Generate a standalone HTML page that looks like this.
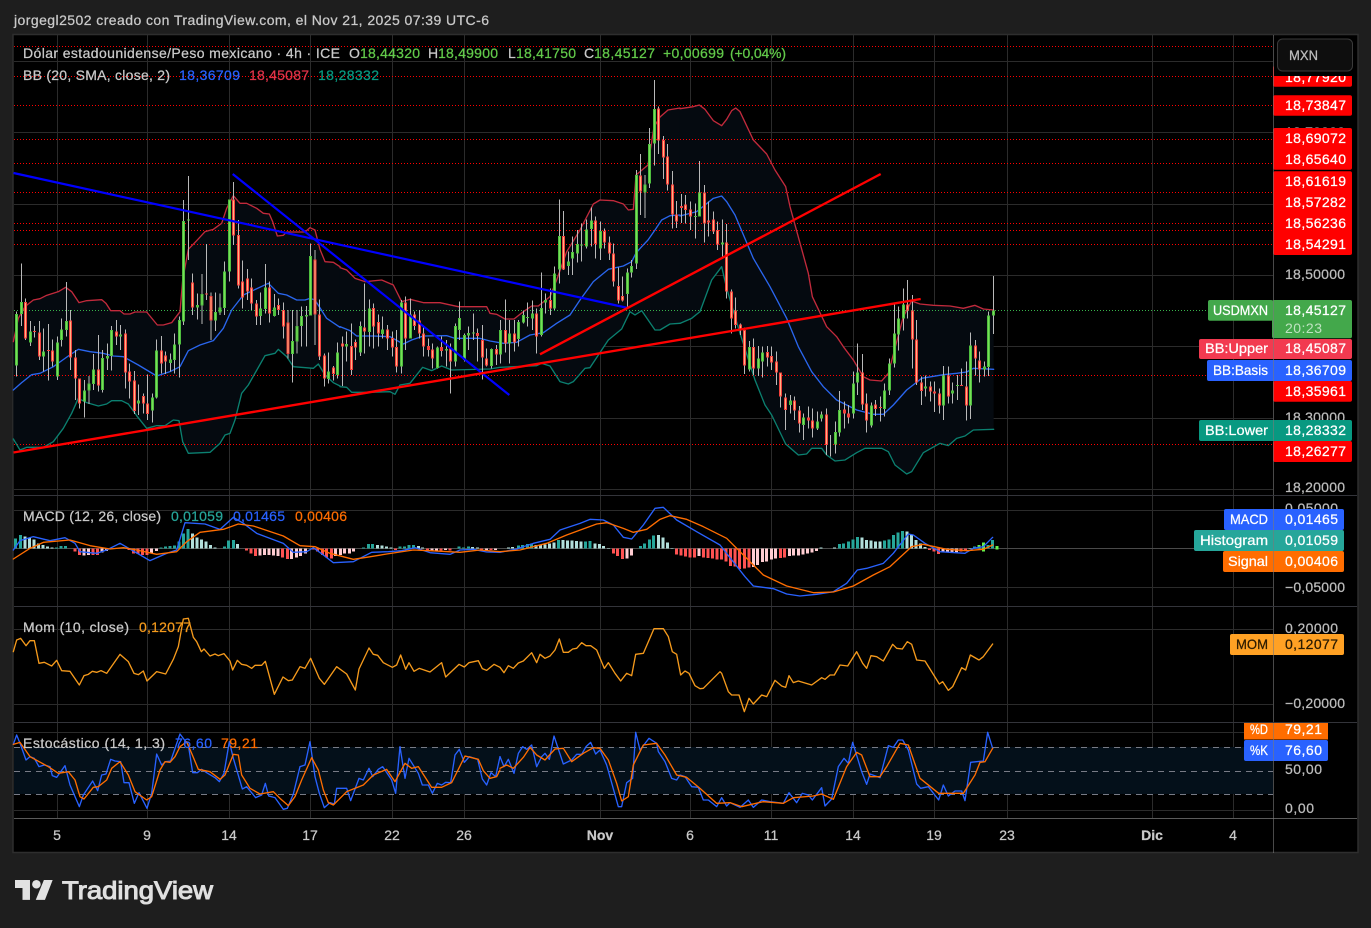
<!DOCTYPE html>
<html lang="es">
<head>
<meta charset="utf-8">
<title>USDMXN</title>
<style>
html,body{margin:0;padding:0;background:#1e1e1e;width:1371px;height:928px;overflow:hidden}
svg{display:block;font-family:"Liberation Sans",sans-serif;font-size:14px}
text{stroke-width:.25}
.w{fill:none;stroke:#b9b9b9;shape-rendering:crispEdges}
.up{fill:none;stroke:#4fbf3f;shape-rendering:crispEdges}
.upi{fill:none;stroke:#78df58;shape-rendering:crispEdges}
.dn{fill:none;stroke:#f2403c;shape-rendering:crispEdges}
.dni{fill:none;stroke:#ffb384;shape-rendering:crispEdges}
.h{shape-rendering:crispEdges}
.l{fill:none;stroke-linejoin:round;stroke-linecap:round}
.t{fill:#bdbdbd;stroke:#bdbdbd}
.g{fill:#c9c9c9;stroke:#c9c9c9}
.v{fill:#62c94a;stroke:#62c94a}
.lb{fill:#fff;stroke:#fff}
.cb{fill:#2962ff;stroke:#2962ff}
.cr{fill:#e0344a;stroke:#e0344a}
.cg{fill:#089981;stroke:#089981}
.ct{fill:#26a69a;stroke:#26a69a}
.co{fill:#ff6d00;stroke:#ff6d00}
.cy{fill:#f59a1c;stroke:#f59a1c}
.cd{fill:#2a1a00;stroke:#2a1a00}
</style>
</head>
<body>
<svg width="1371" height="928" viewBox="0 0 1371 928" xmlns="http://www.w3.org/2000/svg">
<rect width="1371" height="928" fill="#1e1e1e"/>
<text x="14" y="25" class="g" textLength="475">jorgegl2502 creado con TradingView.com, el Nov 21, 2025 07:39 UTC-6</text>
<rect x="13" y="34.5" width="1345" height="818" fill="#000" stroke="#2e2e2e" stroke-width="1.5"/>

<!-- grid -->
<path fill="none" stroke="#2b2b2b" d="M14 61.5H1273M14 132.5H1273M14 204.5H1273M14 275.5H1273M14 346.5H1273M14 418.5H1273M14 489.5H1273M14 510.5H1273M14 587.5H1273M14 629.5H1273M14 704.5H1273M14 732.5H1273M14 810.5H1273"/>
<path fill="none" stroke="#2b2b2b" d="M57.5 35V818M147.5 35V818M229.5 35V818M310.5 35V818M392.5 35V818M464.5 35V818M600.5 35V818M690.5 35V818M771.5 35V818M853.5 35V818M934.5 35V818M1007.5 35V818M1152.5 35V818M1233.5 35V818"/>
<path fill="none" stroke="#33343a" d="M14 495.5H1357M14 606.5H1357M14 722.5H1357"/>

<!-- stoch band -->
<rect x="14" y="747" width="1259" height="47" fill="#04101a"/>
<path fill="none" stroke="#787b86" stroke-dasharray="6 5" d="M14 747.5H1273M14 771.5H1273M14 794.5H1273"/>
<path fill="none" stroke="#4a4a4a" d="M14 548.5H1273"/>

<!-- BB area -->
<g fill="#050a10">
<polygon transform="translate(0,250) scale(.33333)" points="40,275 55,205 75,170 100,150 120,146 140,136 175,125 197,112 215,125 237,158 260,152 305,149 318,160 332,182 360,182 372,192 390,192 405,186 440,186 472,225 490,225 515,218 540,185 548,90 565,-2 590,-28 615,-55 640,-62 665,-80 680,-125 700,-163 720,-140 740,-140 770,-125 790,-110 808,-108 818,-85 832,-42 850,-44 860,-54 915,-54 930,-67 945,-60 960,-2 975,35 1000,37 1020,50 1020,408 1000,398 975,375 955,342 940,355 880,350 860,320 835,298 825,310 795,317 745,405 725,430 705,510 690,550 675,555 660,580 630,607 565,610 548,575 537,512 520,510 495,527 470,527 440,535 410,497 385,462 365,452 335,452 320,462 295,468 260,458 235,445 215,490 190,535 160,575 130,592 80,592 60,600 40,567"/>
<polygon transform="translate(340,180) scale(.33333)" points="0,263 20,270 45,295 75,305 125,300 160,315 185,365 210,358 250,368 300,368 355,380 440,380 450,400 470,403 495,417 522,417 550,395 575,378 595,378 630,350 650,300 680,215 720,150 760,72 780,60 820,62 850,72 865,90 880,88 888,-15 924,-45 942,-159 960,-189 984,-210 1020,-216 1020,430 990,432 960,450 945,450 905,392 885,405 870,395 845,447 805,480 750,563 735,565 700,605 685,612 660,605 630,558 605,550 590,557 480,562 450,567 335,570 305,558 275,572 248,562 210,610 180,615 165,643 150,635 90,637 35,637 20,622 0,620"/>
<polygon transform="translate(680,80) scale(.33333)" points="0,86 40,80 58,75 75,88 100,122 125,137 140,118 155,92 167,84 180,95 220,180 260,222 285,270 317,320 330,380 385,580 397,650 440,740 470,770 490,800 520,840 550,890 570,900 605,903 625,880 670,710 695,663 720,672 760,676 810,678 850,685 885,676 910,687 941,690 941,1048 880,1050 855,1068 830,1075 805,1097 780,1090 730,1118 695,1175 680,1182 645,1155 625,1115 605,1105 555,1105 530,1118 495,1140 465,1143 440,1125 425,1105 395,1105 380,1122 355,1125 317,1092 275,1005 255,975 225,900 180,760 140,625 125,560 95,600 60,695 35,715 0,730"/>
</g>

<!-- dotted levels -->
<path fill="none" stroke="#ff0000" stroke-dasharray="1 2" shape-rendering="crispEdges" d="M14 46.5H1272M14 76.5H1272M14 105.5H1272M14 139.5H1272M14 163.5H1272M14 192.5H1272M14 223.5H1272M14 230.5H1272M14 244.5H1272M14 375.5H1272M14 444.5H1272"/>
<path fill="none" stroke="#37b34a" stroke-dasharray="1 2" shape-rendering="crispEdges" d="M14 310.5H1272"/>

<!-- BB lines -->
<g class="l" stroke-width="4">
<g transform="translate(0,250) scale(.33333)">
<polyline class="l" stroke="#c22a3c" points="40,275 55,205 75,170 100,150 120,146 140,136 175,125 197,112 215,125 237,158 260,152 305,149 318,160 332,182 360,182 372,192 390,192 405,186 440,186 472,225 490,225 515,218 540,185 548,90 565,-2 590,-28 615,-55 640,-62 665,-80 680,-125 700,-163 720,-140 740,-140 770,-125 790,-110 808,-108 818,-85 832,-42 850,-44 860,-54 915,-54 930,-67 945,-60 960,-2 975,35 1000,37 1020,50"/>
<polyline class="l" stroke="#2a66ee" points="40,420 65,398 95,374 120,370 160,350 205,318 235,298 270,305 310,310 340,318 370,320 415,345 470,378 510,365 540,350 565,302 600,285 640,272 670,235 695,180 730,135 805,100 835,130 860,135 890,150 915,150 930,145 945,150 980,205 1020,232"/>
<polyline class="l" stroke="#0b8070" points="40,567 60,600 80,592 130,592 160,575 190,535 215,490 235,445 260,458 295,468 320,462 335,452 365,452 385,462 410,497 440,535 470,527 495,527 520,510 537,512 548,575 565,610 630,607 660,580 675,555 690,550 705,510 725,430 745,405 795,317 825,310 835,298 860,320 880,350 940,355 955,342 975,375 1000,398 1020,408"/>
</g>
<g transform="translate(340,180) scale(.33333)">
<polyline class="l" stroke="#c22a3c" points="0,263 20,270 45,295 75,305 125,300 160,315 185,365 210,358 250,368 300,368 355,380 440,380 450,400 470,403 495,417 522,417 550,395 575,378 595,378 630,350 650,300 680,215 720,150 760,72 780,60 820,62 850,72 865,90 880,88 888,-15 924,-45 942,-159 960,-189 984,-210 1020,-216"/>
<polyline class="l" stroke="#2a66ee" points="0,440 30,452 50,468 100,468 150,470 190,492 215,480 250,468 320,467 345,475 420,475 450,483 490,490 530,487 570,465 610,458 650,430 690,405 720,360 760,305 805,268 850,258 875,245 888,219 905,200 924,180 945,150 965,120 990,107 1020,105"/>
<polyline class="l" stroke="#0b8070" points="0,620 20,622 35,637 90,637 150,635 165,643 180,615 210,610 248,562 275,572 305,558 335,570 450,567 480,562 590,557 605,550 630,558 660,605 685,612 700,605 735,565 750,563 805,480 845,447 870,395 885,405 905,392 945,450 960,450 990,432 1020,430"/>
</g>
<g transform="translate(680,80) scale(.33333)">
<polyline class="l" stroke="#c22a3c" points="0,86 40,80 58,75 75,88 100,122 125,137 140,118 155,92 167,84 180,95 220,180 260,222 285,270 317,320 330,380 385,580 397,650 440,740 470,770 490,800 520,840 550,890 570,900 605,903 625,880 670,710 695,663 720,672 760,676 810,678 850,685 885,676 910,687 941,690"/>
<polyline class="l" stroke="#2a66ee" points="0,408 50,395 100,355 125,348 140,365 165,405 220,535 270,620 320,715 355,800 395,875 430,920 470,960 530,990 580,1003 610,1003 640,975 680,930 725,895 790,884 830,880 860,876 880,865 941,868"/>
<polyline class="l" stroke="#0b8070" points="0,730 35,715 60,695 95,600 125,560 140,625 180,760 225,900 255,975 275,1005 317,1092 355,1125 380,1122 395,1105 425,1105 440,1125 465,1143 495,1140 530,1118 555,1105 605,1105 625,1115 645,1155 680,1182 695,1175 730,1118 780,1090 805,1097 830,1075 855,1068 880,1050 941,1048"/>
</g>
</g>

<!-- candles A -->
<g transform="translate(0,250) scale(.33333)">
<path class="w" stroke-width="3" d="M50 185V380M64 40V228M77 145V270M91 213V288M104 228V262M118 213V330M131 235V365M145 222V392M158 268V350M172 260V390M185 205V290M199 96V260M212 180V360M226 300V450M239 385V475M253 390V503M267 378V462M280 312V420M295 255V425M308 300V428M322 280V360M335 228V362M349 210V285M362 225V300M376 238V415M389 340V445M403 363V492M416 403V495M430 430V490M443 373V510M457 430V518M470 268V445M484 258V370M497 305V372M511 310V365M524 250V370M538 200V383M551 -150V225M565 -222V30M578 70V195M592 130V208M606 72V222M620 -18V150M633 128V270M647 127V243M660 130V195M674 35V195M688 -152V95M701 -204V-15M715 -90V115M728 32V175M742 57V150M755 85V180M769 150V225M782 128V225M796 42V190M809 95V218M823 132V200M836 145V195M850 157V265M864 180V325M877 180V398M891 180V310M905 170V290M919 168V290M932 -20V197M945 0V285M959 148V330M973 310V410M986 308V400M1000 348V392M1013 278V385"/>
<path id="u1" class="up" stroke-width="9" d="M50 192V347M64 156V192M91 244V278M131 304V320M172 277V380M185 238V270M199 213V240M253 421V455M267 400V422M280 358V402M308 324V420M322 318V326M335 240V318M362 253V260M416 451V461M457 442V482M470 301V442M511 328V339M524 283V330M538 210V284M551 -87V215M565 -92V-88M592 165V173M606 132V167M647 186V212M660 172V188M674 64V174M688 -152V65M782 175V198M796 113V177M823 172V198M877 273V312M891 228V275M905 198V228M919 195V200M932 18V197M986 364V387M1013 307V375"/>
<path class="upi" stroke-width="3" d="M50 195V344M64 159V189M91 247V275M131 307V317M172 280V377M185 241V267M199 216V237M253 424V452M267 403V419M280 361V399M308 327V417M335 243V315M457 445V479M470 304V439M524 286V327M538 213V281M551 -84V212M606 135V164M647 189V209M674 67V171M688 -149V62M796 116V174M877 276V309M891 231V272M905 201V225M932 21V194M986 367V384M1013 310V372"/>
<path class="dn" stroke-width="9" d="M77 156V266M104 243V246M118 247V320M145 300V303M158 301V335M212 211V322M226 322V385M239 385V460M295 358V407M349 244V260M376 250V368M389 364V395M403 391V483M430 438V460M443 460V492M484 301V341M497 316V334M578 97V172M620 131V134M633 138V212M701 -152V-43M715 -45V107M728 94V143M742 85V125M755 112V161M769 160V200M809 112V190M836 165V180M850 180V230M864 217V312M945 28V193M959 193V320M973 316V385M1000 352V372"/>
<path class="dni" stroke-width="3" d="M77 159V263M118 250V317M158 304V332M212 214V319M226 325V382M239 388V457M295 361V404M349 247V257M376 253V365M389 367V392M403 394V480M430 441V457M443 463V489M484 304V338M497 319V331M578 100V169M633 141V209M701 -149V-46M715 -42V104M728 97V140M742 88V122M755 115V158M769 163V197M809 115V187M836 168V177M850 183V227M864 220V309M945 31V190M959 196V317M973 319V382M1000 355V369"/>
</g>

<!-- candles B -->
<g transform="translate(340,180) scale(.33333)">
<path class="w" stroke-width="3" d="M7 470V618M19 455V545M34 430V585M46 478V540M61 425V528M73 310V520M88 358V500M100 370V505M115 403V500M127 410V475M142 435V510M157 455V530M169 450V578M184 360V580M196 350V510M211 355V475M223 395V450M238 390V475M250 440V530M265 475V530M277 490V565M292 500V565M304 470V530M319 480V560M331 490V640M346 430V560M358 365V480M373 460V545M385 440V510M400 400V480M412 445V545M427 435V598M439 505V560M454 505V565M469 495V555M481 420V550M496 358V518M508 420V550M523 420V515M535 420V500M550 392V430M562 368V440M577 362V450M589 385V520M604 278V470M616 340V400M631 325V405M643 260V390M658 58V310M670 93V270M685 215V285M697 170V285M712 150V248M724 130V245M739 118V205M754 82V200M766 110V235M781 125V240M793 145V205M808 170V240M820 190V320M835 262V370M847 290V365M862 265V380M874 240V293"/>
<path class="up" stroke-width="9" d="M19 492V500M61 438V518M88 385V456M127 448V462M184 368V560M211 403V476M292 502V564M319 507V511M346 438V545M358 414V450M373 465V540M385 459V467M400 458V461M454 507V558M481 450V523M508 460V490M535 426V477M550 405V428M562 411V414M577 400V415M604 384V465M616 360V368M643 280V385M658 168V268M685 245V258M697 216V236M712 192V220M724 194V197M739 148V200M754 121V147M781 153V205M862 277V342M874 258V278"/>
<path class="upi" stroke-width="3" d="M61 441V515M88 388V453M184 371V557M211 406V473M292 505V561M346 441V542M358 417V447M373 468V537M454 510V555M481 453V520M508 463V487M535 429V474M550 408V425M604 387V462M643 283V382M658 171V265M697 219V233M712 195V217M739 151V197M754 124V144M781 156V202M862 280V339M874 261V275"/>
<path class="dn" stroke-width="9" d="M7 490V500M34 498V570M46 486V503M73 442V455M100 384V440M115 426V461M142 448V476M157 474V503M169 501V560M196 368V476M223 403V438M238 421V461M250 460V500M265 498V510M277 508V536M304 501V513M331 505V545M412 459V468M427 480V533M439 535V557M469 507V523M496 450V490M523 460V487M589 400V470M631 360V385M670 168V268M766 121V192M793 153V188M808 187V220M820 220V305M835 318V362M847 348V362"/>
<path class="dni" stroke-width="3" d="M7 493V497M34 501V567M46 489V500M73 445V452M100 387V437M115 429V458M142 451V473M157 477V500M169 504V557M196 371V473M223 406V435M238 424V458M250 463V497M277 511V533M331 508V542M427 483V530M439 538V554M469 510V520M496 453V487M523 463V484M589 403V467M631 363V382M670 171V265M766 124V189M793 156V185M808 190V217M820 223V302M835 321V359M847 351V359"/>
</g>

<!-- candles C (real coords) -->
<path class="w" d="M636.3 170V269M640.3 154V215M645 175V218M649.3 128V188M654.3 80V165.7M658.3 106.7V154M663.3 136V179M667.3 144V190.7M672.3 171V228.3M676.3 201V228M681.3 194V223"/>
<path class="up" stroke-width="3" d="M636.3 175V263.3M645 184.3V192.3M649.3 144V183.7M654.3 109V143.3"/>
<path class="upi" d="M636.3 176V262.3M645 185.3V191.3M649.3 145V182.7M654.3 110V142.3"/>
<path class="dn" stroke-width="3" d="M640.3 175.3V191.7M658.3 108.3V140.7M663.3 140V157.3M667.3 156.3V184.3M672.3 184.3V214.3M676.3 214.3V221.7M681.3 206V208"/>
<path class="dni" d="M640.3 176.3V190.7M658.3 109.3V139.7M663.3 141V156.3M667.3 157.3V183.3M672.3 185.3V213.3M676.3 215.3V220.7"/>

<!-- candles D -->
<g transform="translate(680,80) scale(.33333)">
<path class="w" stroke-width="3" d="M17 345V430M32 365V450M47 370V475M59 243V410M73 315V488M86 365V470M100 395V462M113 425V510M128 418V530M140 432V655M155 628V760M167 652V745M182 730V765M194 742V882M209 783V875M220 775V885M236 798V888M248 800V893M263 798V860M275 800V870M290 815V915M302 877V982M317 940V1050M331 945V1000M344 950V1020M359 978V1058M371 1000V1080M386 980V1045M398 985V1072M412 995V1050M425 995V1025M439 985V1125M452 1065V1130M466 1024V1120M479 933V1070M493 965V1045M505 975V1030M520 875V1015M533 790V945M548 822V990M560 940V1058M575 968V1042M587 960V1008M602 950V1025M614 910V1010M629 835V945M643 668V862M656 680V812M670 625V752M682 600V715M697 645V866M710 720V915M725 890V975M737 887V950M752 905V965M764 905V996M779 925V1000M791 858V1020M806 860V970M818 908V970M833 885V960M845 865V915M860 845V1022M872 757V1017M887 780V887M899 815V908M914 845V890M926 695V888M941 588V762"/>
<path class="up" stroke-width="9" d="M47 408V411M59 338V410M128 487V494M209 801V868M236 835V866M248 817V845M331 961V975M371 1012V1035M412 1024V1046M425 1003V1016M466 1056V1094M479 990V1058M520 910V1000M533 877V908M575 977V1036M614 931V987M629 851V932M643 760V850M656 715V764M670 673V715M737 919V926M791 886V977M818 931V941M833 915V918M872 796V977M914 859V869M926 706V861M941 691V707"/>
<path class="upi" stroke-width="3" d="M59 341V407M209 804V865M236 838V863M248 820V842M371 1015V1032M412 1027V1043M466 1059V1091M479 993V1055M520 913V997M533 880V905M575 980V1033M614 934V984M629 854V929M643 763V847M656 718V761M670 676V712M791 889V974M872 799V974M926 709V858M941 694V704"/>
<path class="dn" stroke-width="9" d="M17 373V390M32 388V410M73 338V430M86 421V428M100 418V454M113 450V493M140 488V635M155 634V716M167 692V735M182 734V750M194 750V857M220 801V866M263 816V833M275 828V848M290 844V878M302 877V950M317 952V990M344 961V992M359 991V1030M386 1012V1022M398 1021V1046M439 1003V1095M493 988V1000M505 1000V1013M548 877V973M560 970V1022M587 973V987M602 981V984M682 673V692M697 692V778M710 778V907M725 907V933M752 919V935M764 934V941M779 940V977M806 886V950M845 915V918M860 919V977M887 796V835M899 842V869"/>
<path class="dni" stroke-width="3" d="M17 376V387M32 391V407M73 341V427M100 421V451M113 453V490M140 491V632M155 637V713M167 695V732M182 737V747M194 753V854M220 804V863M263 819V830M275 831V845M290 847V875M302 880V947M317 955V987M344 964V989M359 994V1027M398 1024V1043M439 1006V1092M548 880V970M560 973V1019M587 976V984M682 676V689M697 695V775M710 781V904M725 910V930M752 922V932M779 943V974M806 889V947M860 922V974M887 799V832M899 845V866"/>
</g>

<!-- trend lines -->
<g fill="none" stroke-linecap="butt">
<path stroke="#0000ff" stroke-width="2.2" d="M13.5 173L628 308M232.7 174L509.3 395"/>
<path stroke="#ff0000" stroke-width="2.4" d="M13.5 452.5L920.7 299M540 354.3L880.7 174"/>
</g>

<!-- MACD histogram -->
<g class="h" transform="translate(0,500) scale(.33333)" fill="none" stroke-width="9">
<path stroke="#26a69a" d="M47 145V115M61 145V105M170 145V142M183 145V138M197 145V138M483 145V143M496 145V140M510 145V138M524 145V136M537 145V125M550 145V100M564 145V87M673 145V140M686 145V122M700 145V120M1091 145V142M1105 145V132M1118 145V132M1200 145V139M1214 145V140M1227 145V135M1241 145V135M1377 145V140M1391 145V142M1405 145V139"/>
<path stroke="#b2dfdb" d="M75 145V110M88 145V112M102 145V118M115 145V130M129 145V135M143 145V140M156 145V143M578 145V100M591 145V112M605 145V118M618 145V124M632 145V135M645 145V143M713 145V132M1132 145V135M1146 145V137M1159 145V140M1173 145V143M1255 145V138M1268 145V143M1418 145V141M1432 145V142"/>
<path stroke="#ff5252" d="M225 145V155M238 145V165M279 145V165M292 145V165M387 145V150M400 145V160M414 145V162M428 145V165M441 145V165M740 145V152M753 145V160M767 145V168M848 145V173M862 145V177M940 145V148M953 145V155M967 145V165M980 145V172M994 145V175M1187 145V150M1282 145V152M1323 145V152M1350 145V152M1445 145V150M1473 145V150"/>
<path stroke="#ffcdd2" d="M252 145V167M265 145V165M306 145V158M320 145V153M455 145V160M469 145V153M780 145V167M794 145V165M807 145V165M821 145V167M834 145V168M875 145V177M889 145V173M902 145V168M916 145V160M1007 145V168M1021 145V165M1034 145V160M1048 145V160M1061 145V155M1296 145V153M1309 145V153M1336 145V150M1459 145V150M1486 145V150"/>
</g>
<g class="h" transform="translate(500,500) scale(.33333)" fill="none" stroke-width="9">
<path stroke="#26a69a" d="M55 145V137M68 145V135M82 145V132M95 145V130M175 145V120M256 145V124M270 145V123M421 145V138M434 145V130M448 145V118M461 145V106M1018 145V132M1031 145V130M1045 145V125M1059 145V118M1072 145V111M1153 145V122M1167 145V118M1180 145V105M1194 145V97M1207 145V93M1424 145V140M1464 145V135M1478 145V120"/>
<path stroke="#b2dfdb" d="M25 145V143M38 145V141M108 145V135M122 145V135M135 145V133M149 145V130M162 145V128M189 145V120M202 145V121M216 145V122M229 145V123M243 145V124M285 145V130M298 145V132M311 145V138M325 145V144M475 145V105M489 145V113M502 145V127M516 145V144M963 145V143M1004 145V143M1086 145V113M1099 145V120M1113 145V122M1126 145V124M1140 145V124M1221 145V95M1235 145V105M1248 145V120M1262 145V130M1275 145V141M1410 145V144"/>
<path stroke="#ff5252" d="M340 145V160M353 145V168M367 145V177M529 145V163M543 145V167M557 145V170M570 145V172M584 145V172M611 145V172M624 145V174M638 145V176M651 145V178M665 145V178M678 145V184M692 145V198M705 145V200M719 145V207M733 145V205M747 145V203M841 145V174M854 145V173M1289 145V150M1302 145V155M1316 145V162M1383 145V155M1397 145V150"/>
<path stroke="#ffcdd2" d="M381 145V175M394 145V167M597 145V168M760 145V201M773 145V195M787 145V186M800 145V185M814 145V178M827 145V175M868 145V168M881 145V167M895 145V167M909 145V163M922 145V160M936 145V157M949 145V153M1329 145V158M1343 145V158M1356 145V158M1370 145V158"/>
<path stroke="#66f24a" d="M1437 145V135M1451 155V128M1491 148V138"/>
</g>

<!-- indicator lines left -->
<g transform="translate(0,500) scale(.33333)" stroke-width="4">
<polyline class="l" stroke="#2962ff" points="40,150 60,122 100,110 150,122 195,113 225,130 240,155 290,160 320,150 360,130 395,150 450,182 500,160 530,150 555,68 615,72 660,88 700,52 730,70 770,100 850,130 880,157 920,155 940,143 970,165 1000,188 1060,185 1115,157 1165,155 1205,152 1245,143 1290,158 1350,163 1380,150 1420,148 1460,156 1500,157"/>
<polyline class="l" stroke="#ff6d00" points="40,177 90,145 130,127 210,120 270,137 330,147 370,143 410,150 470,163 530,155 560,125 600,97 670,88 715,72 760,78 850,108 900,137 945,140 990,160 1060,178 1100,172 1160,162 1240,150 1290,152 1380,157 1440,150 1500,155"/>
<polyline class="l" stroke="#f59a1c" points="40,455 50,420 62,415 78,437 90,422 103,422 117,490 133,487 155,498 170,481 185,512 210,514 238,555 252,527 265,523 277,514 290,517 303,512 320,520 360,463 385,485 402,520 415,524 430,513 441,543 470,515 497,522 520,478 535,440 550,357 565,355 580,412 590,425 604,455 612,447 630,468 645,462 655,467 672,461 690,483 698,510 712,481 725,493 740,496 755,505 765,496 785,496 796,484 823,583 849,531 865,542 877,540 900,500 915,505 932,475 958,535 973,553 1010,500 1040,522 1066,570 1077,507 1107,444 1120,463 1133,466 1150,488 1177,502 1190,495 1202,465 1217,508 1227,488 1242,514 1258,505 1290,516 1325,488 1337,531 1377,493 1393,501 1407,488 1435,482 1447,506 1460,511 1482,493 1500,502"/>
<polyline class="l" stroke="#2962ff" points="40,733 50,705 62,735 78,780 90,770 103,775 117,800 133,795 150,800 157,827 170,832 195,797 210,855 238,920 250,885 278,843 293,872 305,825 318,822 332,778 345,783 362,785 372,848 387,848 403,910 417,878 441,925 455,880 470,762 485,795 497,785 512,783 540,702 565,735 578,818 592,818 605,808 620,818 645,833 658,845 672,820 688,725 700,775 727,867 740,860 767,893 785,885 796,850 806,888 825,893 850,928 862,925 880,882 900,800 915,795 930,725 945,830 958,880 973,923 990,908 1003,912 1010,865 1040,865 1052,902 1077,835 1090,840 1107,805 1118,830 1135,808 1148,800 1175,840 1187,880 1200,740 1215,835 1227,775 1255,820 1267,855 1285,855 1297,880 1312,850 1325,855 1337,847 1352,848 1365,765 1378,748 1393,787 1408,770 1433,778 1447,837 1460,855 1473,818 1487,830 1500,770"/>
<polyline class="l" stroke="#ff6d00" points="40,733 60,727 90,770 145,800 175,820 205,815 225,840 240,890 252,897 280,862 295,860 320,840 335,805 360,785 385,825 405,875 440,900 455,890 480,810 495,785 510,787 525,770 540,740 560,725 575,760 595,808 630,815 660,838 675,825 700,763 715,765 725,825 750,865 780,882 820,875 840,895 865,917 885,890 905,840 935,773 955,810 970,870 985,908 1000,915 1040,875 1090,855 1120,825 1160,808 1185,845 1215,790 1235,805 1255,800 1295,862 1325,862 1355,848 1395,768 1435,778 1450,812 1470,835 1490,830 1500,810"/>
</g>
<g transform="translate(500,500) scale(.33333)" stroke-width="4">
<polyline class="l" stroke="#2962ff" points="0,157 50,147 100,130 150,118 180,90 240,70 270,58 310,60 340,75 370,112 395,117 430,75 465,25 490,22 530,60 590,95 660,135 735,230 760,258 820,266 860,282 900,288 950,283 1000,275 1040,250 1072,210 1100,205 1150,190 1180,160 1225,102 1240,105 1275,130 1320,155 1395,160 1420,145 1450,140 1478,112"/>
<polyline class="l" stroke="#ff6d00" points="0,155 60,150 140,130 200,105 290,72 320,68 370,85 400,97 440,88 480,58 510,47 560,58 610,80 680,115 730,165 790,225 860,258 940,278 1000,276 1060,258 1120,225 1170,200 1235,140 1270,133 1340,148 1400,152 1450,148 1478,135"/>
<polyline class="l" stroke="#f59a1c" points="0,502 12,518 25,497 40,505 55,489 70,483 95,458 110,488 120,463 135,475 150,468 165,450 178,417 190,457 205,457 218,447 230,445 245,428 258,437 272,437 290,450 313,505 325,488 345,520 362,543 380,520 395,527 407,463 430,460 462,386 490,386 505,410 517,455 530,463 542,525 555,513 567,520 585,557 600,566 610,565 660,515 665,520 685,575 695,585 717,585 733,635 747,595 760,612 785,585 800,590 825,541 845,558 857,562 867,527 880,548 895,543 935,555 965,533 975,538 990,525 1003,525 1020,495 1043,498 1070,455 1088,490 1100,505 1113,467 1130,470 1150,483 1178,433 1190,445 1207,447 1222,425 1235,433 1250,480 1275,483 1318,552 1328,545 1345,571 1358,560 1385,503 1397,510 1411,465 1437,480 1450,470 1478,432"/>
<polyline class="l" stroke="#2962ff" points="0,770 12,800 25,778 42,820 55,760 68,740 80,748 95,735 110,800 125,770 135,760 148,778 162,708 190,792 215,780 230,763 245,763 258,740 272,727 287,762 300,750 320,795 355,920 365,920 380,848 398,835 407,697 420,750 447,715 470,730 475,755 495,785 515,835 530,840 540,825 555,830 575,860 595,862 610,900 625,900 650,920 665,893 680,918 690,908 720,922 745,900 760,922 785,900 810,905 850,910 867,878 890,908 907,880 925,885 937,900 965,863 975,918 995,897 1015,800 1032,775 1045,790 1058,727 1085,815 1100,853 1110,822 1140,833 1165,737 1180,742 1195,720 1208,720 1225,750 1250,852 1262,865 1285,860 1316,900 1330,855 1345,888 1365,873 1385,873 1395,902 1412,787 1430,785 1450,783 1463,697 1478,745"/>
<polyline class="l" stroke="#ff6d00" points="0,805 20,795 40,805 70,772 90,742 110,765 135,780 165,747 190,745 215,785 250,760 280,743 300,745 325,780 350,850 365,903 385,890 400,795 430,735 470,730 495,765 530,825 560,832 600,865 650,910 690,908 725,920 790,905 850,910 880,893 940,888 965,882 1000,898 1040,800 1070,757 1085,765 1110,830 1140,830 1160,800 1200,730 1225,735 1260,835 1316,880 1390,880 1425,825 1440,787 1455,785 1478,745"/>
</g>

<!-- legends -->
<text x="23" y="58" class="g" textLength="317">Dólar estadounidense/Peso mexicano · 4h · ICE</text>
<text x="349" y="58" class="g">O</text><text x="360" y="58" class="v" textLength="60">18,44320</text>
<text x="428" y="58" class="g">H</text><text x="438" y="58" class="v" textLength="60">18,49900</text>
<text x="508" y="58" class="g">L</text><text x="516" y="58" class="v" textLength="60">18,41750</text>
<text x="584" y="58" class="g">C</text><text x="594" y="58" class="v" textLength="61">18,45127</text>
<text x="663" y="58" class="v" textLength="61">+0,00699</text><text x="730" y="58" class="v" textLength="56">(+0,04%)</text>

<text x="23" y="80" class="g" textLength="147">BB (20, SMA, close, 2)</text>
<text x="179" y="80" class="cb" textLength="61">18,36709</text>
<text x="249" y="80" class="cr" textLength="60">18,45087</text>
<text x="318" y="80" class="cg" textLength="61">18,28332</text>

<text x="23" y="521" class="g" textLength="138">MACD (12, 26, close)</text>
<text x="171" y="521" class="ct" textLength="52">0,01059</text>
<text x="233" y="521" class="cb" textLength="52">0,01465</text>
<text x="295" y="521" class="co" textLength="52">0,00406</text>

<text x="23" y="632" class="g" textLength="106">Mom (10, close)</text>
<text x="139" y="632" class="cy" textLength="52">0,12077</text>

<text x="23" y="748" class="g" textLength="142">Estocástico (14, 1, 3)</text>
<text x="175" y="748" class="cb" textLength="37">76,60</text>
<text x="221" y="748" class="co" textLength="37">79,21</text>

<!-- time axis -->
<path fill="none" stroke="#5a5a5a" d="M14 818.5H1357"/>
<g class="g" text-anchor="middle">
<text x="57" y="840">5</text><text x="147" y="840">9</text><text x="229" y="840">14</text><text x="310" y="840">17</text><text x="392" y="840">22</text><text x="464" y="840">26</text>
<text x="600" y="840" font-weight="bold">Nov</text><text x="690" y="840">6</text><text x="771" y="840">11</text><text x="853" y="840">14</text><text x="934" y="840">19</text><text x="1007" y="840">23</text>
<text x="1152" y="840" font-weight="bold">Dic</text><text x="1233" y="840">4</text>
</g>

<!-- price axis ticks -->
<g class="t">
<text x="1285" y="137" textLength="60">18,70000</text>
<text x="1285" y="279" textLength="60">18,50000</text>
<text x="1285" y="422" textLength="60">18,30000</text>
<text x="1285" y="492" textLength="60">18,20000</text>
<text x="1285" y="513" textLength="53">0,05000</text>
<text x="1285" y="592" textLength="60">−0,05000</text>
<text x="1285" y="633" textLength="53">0,20000</text>
<text x="1285" y="708" textLength="60">−0,20000</text>
<text x="1285" y="735">100,00</text>
<text x="1285" y="774" textLength="37">50,00</text>
<text x="1285" y="813" textLength="29">0,00</text>
</g>

<!-- labels -->
<g font-size="14">
<g fill="#ff0000">
<rect x="1273" y="66" width="79" height="20.7" rx="2"/>
<rect x="1273" y="95.3" width="79" height="20.4" rx="2"/>
<rect x="1273" y="128" width="79" height="41.7" rx="2"/>
<rect x="1273" y="171.3" width="79" height="83.7" rx="2"/>
<rect x="1273" y="381" width="79" height="20.7" rx="2"/>
<rect x="1273" y="441" width="79" height="21" rx="2"/>
</g>
<g class="lb">
<text x="1285" y="82" textLength="61">18,77920</text>
<text x="1285" y="110" textLength="61">18,73847</text>
<text x="1285" y="143" textLength="61">18,69072</text>
<text x="1285" y="164" textLength="61">18,65640</text>
<text x="1285" y="186" textLength="61">18,61619</text>
<text x="1285" y="207" textLength="61">18,57282</text>
<text x="1285" y="228" textLength="61">18,56236</text>
<text x="1285" y="249" textLength="61">18,54291</text>
<text x="1285" y="396" textLength="61">18,35961</text>
<text x="1285" y="456" textLength="61">18,26277</text>
</g>

<rect x="1208" y="300" width="65" height="20.7" rx="2" fill="#43a84b"/>
<rect x="1272" y="300" width="80" height="38.3" rx="2" fill="#43a84b"/>
<text x="1213" y="315" class="lb" textLength="55" lengthAdjust="spacingAndGlyphs">USDMXN</text>
<text x="1285" y="315" class="lb" textLength="61">18,45127</text>
<text x="1285" y="333" fill="#bfe3c1" textLength="37">20:23</text>

<rect x="1199" y="339" width="153" height="20" rx="2" fill="#f23a50"/>
<text x="1205" y="353" class="lb" textLength="63" lengthAdjust="spacingAndGlyphs">BB:Upper</text>
<text x="1285" y="353" class="lb" textLength="61">18,45087</text>

<rect x="1207" y="360" width="145" height="21" rx="2" fill="#2962ff"/>
<text x="1213" y="375" class="lb" textLength="55" lengthAdjust="spacingAndGlyphs">BB:Basis</text>
<text x="1285" y="375" class="lb" textLength="61">18,36709</text>

<rect x="1199" y="420" width="153" height="21" rx="2" fill="#089981"/>
<text x="1205" y="435" class="lb" textLength="63" lengthAdjust="spacingAndGlyphs">BB:Lower</text>
<text x="1285" y="435" class="lb" textLength="61">18,28332</text>

<rect x="1224" y="509" width="120" height="21" rx="2" fill="#2962ff"/>
<text x="1230" y="524" class="lb" textLength="38" lengthAdjust="spacingAndGlyphs">MACD</text>
<text x="1285" y="524" class="lb" textLength="53">0,01465</text>
<rect x="1194" y="530" width="150" height="21" rx="2" fill="#26a69a"/>
<text x="1200" y="545" class="lb" textLength="68" lengthAdjust="spacingAndGlyphs">Histogram</text>
<text x="1285" y="545" class="lb" textLength="53">0,01059</text>
<rect x="1223" y="551" width="121" height="21" rx="2" fill="#ff6d00"/>
<text x="1228" y="566" class="lb" textLength="40" lengthAdjust="spacingAndGlyphs">Signal</text>
<text x="1285" y="566" class="lb" textLength="53">0,00406</text>

<rect x="1230" y="634" width="114" height="21" rx="2" fill="#ffa124"/>
<text x="1236" y="649" class="cd" textLength="32" lengthAdjust="spacingAndGlyphs">MOM</text>
<text x="1285" y="649" class="cd" textLength="53">0,12077</text>

<rect x="1244" y="723" width="84" height="16.5" fill="#ff6d00"/>
<text x="1250" y="734" class="lb" textLength="18" lengthAdjust="spacingAndGlyphs">%D</text>
<text x="1285" y="734" class="lb" textLength="37">79,21</text>
<rect x="1244" y="740" width="84" height="21" rx="2" fill="#2962ff"/>
<text x="1250" y="755" class="lb" textLength="18" lengthAdjust="spacingAndGlyphs">%K</text>
<text x="1285" y="755" class="lb" textLength="37">76,60</text>
</g>

<!-- axis line -->
<path fill="none" stroke="#7a7a7a" stroke-opacity=".6" d="M1273.5 35V853"/>
<path fill="none" stroke="#33343a" d="M1273 495.5H1357M1273 606.5H1357M1273 722.5H1357"/>

<!-- MXN button -->
<rect x="1274" y="36" width="83" height="40" fill="#000"/>
<rect x="1277.5" y="39" width="75" height="32" rx="5" fill="#0e0e0e" stroke="#3a3a3a"/>
<text x="1289" y="60" class="t" textLength="29" lengthAdjust="spacingAndGlyphs">MXN</text>

<!-- logo -->
<g fill="#e2e2e2" transform="translate(15,875.7) scale(1.07)">
<path d="M14 22.6H7V11.5H0V4h14zM28 22.6h-8.6L27 4h8.2z"/>
<circle cx="20" cy="8" r="4"/>
</g>
<text x="62" y="899" style="fill:#e0e0e0;stroke:#e0e0e0;stroke-width:1" font-size="25" textLength="151" lengthAdjust="spacingAndGlyphs">TradingView</text>
</svg>
</body>
</html>
